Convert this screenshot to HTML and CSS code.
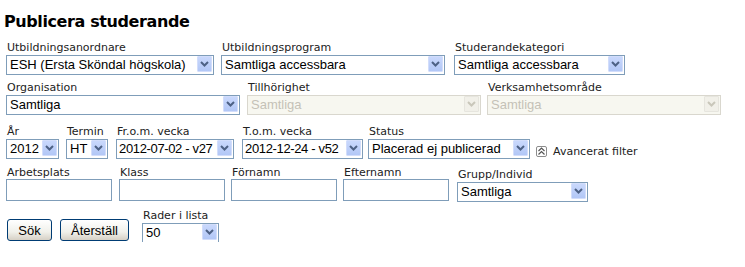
FILE: index.html
```html
<!DOCTYPE html>
<html>
<head>
    <title>Publicera studerande</title>
    <link rel="stylesheet" href="styles.css">
</head>
<body>
    <h1>Publicera studerande</h1>
    <form class="filter">
        <div class="row row-1">
            <div class="field">
                <label>Utbildningsanordnare</label>
                <span class="combo w-anordnare">
                    <select><option>ESH (Ersta Sköndal högskola)</option></select>
                    <span class="arrow"><svg viewBox="0 0 9 6" width="9" height="6"><path d="M1 1l3.5 3.5L8 1" /></svg></span>
                </span>
            </div>
            <div class="field ml-7">
                <label>Utbildningsprogram</label>
                <span class="combo w-program">
                    <select><option>Samtliga accessbara</option></select>
                    <span class="arrow"><svg viewBox="0 0 9 6" width="9" height="6"><path d="M1 1l3.5 3.5L8 1" /></svg></span>
                </span>
            </div>
            <div class="field ml-9">
                <label>Studerandekategori</label>
                <span class="combo w-kategori">
                    <select><option>Samtliga accessbara</option></select>
                    <span class="arrow"><svg viewBox="0 0 9 6" width="9" height="6"><path d="M1 1l3.5 3.5L8 1" /></svg></span>
                </span>
            </div>
        </div>

        <div class="row row-2">
            <div class="field">
                <label>Organisation</label>
                <span class="combo w-wide">
                    <select><option>Samtliga</option></select>
                    <span class="arrow"><svg viewBox="0 0 9 6" width="9" height="6"><path d="M1 1l3.5 3.5L8 1" /></svg></span>
                </span>
            </div>
            <div class="field ml-7">
                <label>Tillhörighet</label>
                <span class="combo w-wide disabled">
                    <select disabled><option>Samtliga</option></select>
                    <span class="arrow"><svg viewBox="0 0 9 6" width="9" height="6"><path d="M1 1l3.5 3.5L8 1" /></svg></span>
                </span>
            </div>
            <div class="field ml-6">
                <label>Verksamhetsområde</label>
                <span class="combo w-wide disabled">
                    <select disabled><option>Samtliga</option></select>
                    <span class="arrow"><svg viewBox="0 0 9 6" width="9" height="6"><path d="M1 1l3.5 3.5L8 1" /></svg></span>
                </span>
            </div>
        </div>

        <div class="row row-3">
            <div class="field">
                <label>År</label>
                <span class="combo w-ar">
                    <select><option>2012</option></select>
                    <span class="arrow"><svg viewBox="0 0 9 6" width="9" height="6"><path d="M1 1l3.5 3.5L8 1" /></svg></span>
                </span>
            </div>
            <div class="field ml-7">
                <label>Termin</label>
                <span class="combo w-termin">
                    <select><option>HT</option></select>
                    <span class="arrow"><svg viewBox="0 0 9 6" width="9" height="6"><path d="M1 1l3.5 3.5L8 1" /></svg></span>
                </span>
            </div>
            <div class="field ml-8">
                <label>Fr.o.m. vecka</label>
                <span class="combo w-from tight">
                    <select><option>2012-07-02 - v27</option></select>
                    <span class="arrow"><svg viewBox="0 0 9 6" width="9" height="6"><path d="M1 1l3.5 3.5L8 1" /></svg></span>
                </span>
            </div>
            <div class="field ml-8">
                <label>T.o.m. vecka</label>
                <span class="combo w-tom tight">
                    <select><option>2012-12-24 - v52</option></select>
                    <span class="arrow"><svg viewBox="0 0 9 6" width="9" height="6"><path d="M1 1l3.5 3.5L8 1" /></svg></span>
                </span>
            </div>
            <div class="field ml-5">
                <label>Status</label>
                <span class="combo w-status">
                    <select><option>Placerad ej publicerad</option></select>
                    <span class="arrow"><svg viewBox="0 0 9 6" width="9" height="6"><path d="M1 1l3.5 3.5L8 1" /></svg></span>
                </span>
            </div>
            <a class="advanced" href="#">
                <svg class="toggle" viewBox="0 0 11 11" width="11" height="11">
                    <rect x="0.5" y="0.5" width="10" height="10" rx="1.5" />
                    <path d="M2.5 5l3-3 3 3M2.5 8.5l3-3 3 3" />
                </svg>
                Avancerat filter
            </a>
        </div>

        <div class="row row-4">
            <div class="field">
                <label>Arbetsplats</label>
                <input type="text" class="text">
            </div>
            <div class="field ml-7">
                <label>Klass</label>
                <input type="text" class="text">
            </div>
            <div class="field ml-6">
                <label>Förnamn</label>
                <input type="text" class="text">
            </div>
            <div class="field ml-6">
                <label>Efternamn</label>
                <input type="text" class="text">
            </div>
            <div class="field ml-8">
                <label>Grupp/Individ</label>
                <span class="combo w-grupp">
                    <select><option>Samtliga</option></select>
                    <span class="arrow"><svg viewBox="0 0 9 6" width="9" height="6"><path d="M1 1l3.5 3.5L8 1" /></svg></span>
                </span>
            </div>
        </div>

        <div class="row row-5">
            <button type="button" class="btn btn-sok">Sök</button>
            <button type="button" class="btn btn-reset">Återställ</button>
            <div class="field">
                <label>Rader i lista</label>
                <span class="combo w-rader">
                    <select><option>50</option></select>
                    <span class="arrow"><svg viewBox="0 0 9 6" width="9" height="6"><path d="M1 1l3.5 3.5L8 1" /></svg></span>
                </span>
            </div>
        </div>
    </form>
</body>
</html>
```

FILE: styles.css
```css
body {
    margin: 0;
    padding: 0 0 0 6px;
    background-color: #ffffff;
    font-family: "DejaVu Sans", Verdana, sans-serif;
    color: #222222;
}

h1 {
    margin: 12px 0 0 -2px;
    font-size: 16px;
    line-height: 20px;
    font-weight: bold;
    color: #000000;
    letter-spacing: -0.4px;
}

.row {
    display: flex;
    align-items: flex-end;
}

.row-1 {
    margin-top: 9px;
}

.row-2 {
    margin-top: 7px;
}

.row-3 {
    margin-top: 11px;
}

.row-4 {
    margin-top: 8px;
}

.row-5 {
    margin-top: 8px;
}

.ml-5 { margin-left: 5px; }
.ml-6 { margin-left: 6px; }
.ml-7 { margin-left: 7px; }
.ml-8 { margin-left: 8px; }
.ml-9 { margin-left: 9px; }

.field {
    display: flex;
    flex-direction: column;
}

.field label {
    font-size: 11px;
    line-height: 13px;
    padding-left: 1px;
    white-space: nowrap;
}

.combo {
    position: relative;
    display: block;
    height: 20px;
}

.combo select {
    appearance: none;
    -webkit-appearance: none;
    width: 100%;
    height: 20px;
    margin: 0;
    padding: 0 0 0 3px;
    border: 1px solid #7f9db9;
    border-radius: 0;
    background-color: #ffffff;
    font-family: "Liberation Sans", Arial, sans-serif;
    font-size: 13px;
    color: #000000;
    outline: none;
}

.combo.tight select {
    padding-left: 2px;
    letter-spacing: -0.35px;
}

.combo .arrow {
    position: absolute;
    top: 2px;
    right: 2px;
    bottom: 2px;
    width: 15px;
    box-sizing: border-box;
    border: 1px solid #d2ddfb;
    border-radius: 1px;
    background: linear-gradient(#c9d8fc, #b2c7f6);
    display: flex;
    align-items: center;
    justify-content: center;
    pointer-events: none;
}

.combo .arrow path {
    fill: none;
    stroke: #4d6185;
    stroke-width: 2;
}

.combo.disabled select {
    background-color: #f5f4ea;
    border-color: #c9c7ba;
    color: #aca899;
}

.combo.disabled .arrow {
    background: #f1f0e9;
    border-color: #e6e5de;
}

.combo.disabled .arrow path {
    stroke: #c9c7ba;
}

.w-anordnare { width: 208px; }
.w-program { width: 224px; }
.w-kategori { width: 171px; }
.w-wide { width: 234px; }
.w-ar { width: 53px; }
.w-termin { width: 42px; }
.w-from { width: 118px; }
.w-tom { width: 121px; }
.w-status { width: 162px; }
.w-grupp { width: 131px; }
.w-rader { width: 77px; }

.advanced {
    display: flex;
    align-items: center;
    margin-left: 6px;
    margin-bottom: 0;
    font-size: 11px;
    line-height: 13px;
    color: #222222;
    text-decoration: none;
    gap: 6px;
}

.toggle rect {
    fill: #ffffff;
    stroke: #8c8c8c;
}

.toggle path {
    fill: none;
    stroke: #555555;
    stroke-width: 1.2;
}

.text {
    width: 106px;
    height: 22px;
    box-sizing: border-box;
    margin: 0;
    border: 1px solid #7f9db9;
    padding: 0 2px;
    font-family: "Liberation Sans", Arial, sans-serif;
    font-size: 13px;
}

.btn {
    height: 22px;
    margin-bottom: 1px;
    padding: 0;
    border: 1px solid #003c74;
    border-radius: 3px;
    background: linear-gradient(#ffffff, #f0f0ea 60%, #d6d0c5);
    font-family: "Liberation Sans", Arial, sans-serif;
    font-size: 13px;
    color: #000000;
    cursor: pointer;
}

.btn-sok {
    width: 45px;
    margin-left: 1px;
}

.btn-reset {
    width: 69px;
    margin-left: 8px;
}

.row-5 .field {
    margin-left: 13px;
}
```
